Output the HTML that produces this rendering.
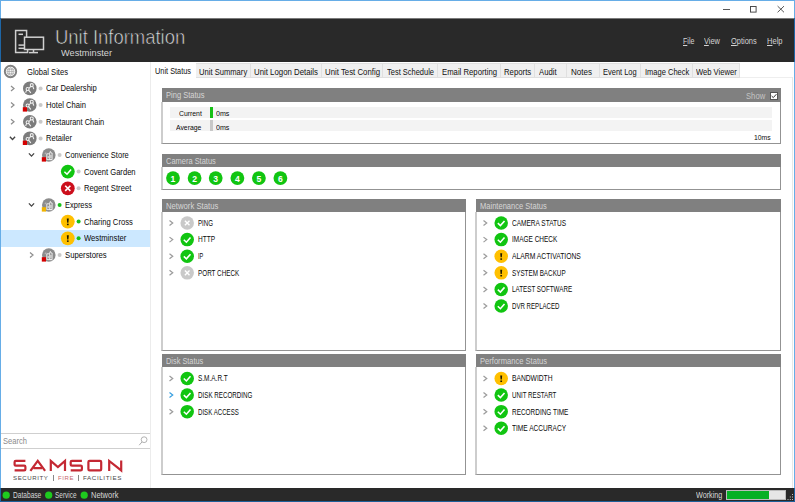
<!DOCTYPE html>
<html><head><meta charset="utf-8"><style>
html,body{margin:0;padding:0;}
body{width:795px;height:502px;position:relative;overflow:hidden;background:#fff;font-family:"Liberation Sans", sans-serif;}
</style></head><body>
<div style="position:absolute;left:0px;top:0px;width:795px;height:18px;background:#ffffff;"></div>
<div style="position:absolute;left:0px;top:18px;width:795px;height:44px;background:#292929;"></div>
<div style="position:absolute;left:0px;top:18px;width:795px;height:1px;background:#7a7a7a;"></div>
<div style="position:absolute;left:0px;top:488px;width:795px;height:14px;background:#292929;"></div>
<div style="position:absolute;left:150px;top:62px;width:1px;height:426px;background:#ececec;"></div>
<div style="position:absolute;left:0px;top:0px;width:795px;height:1px;background:#66ade7;"></div>
<div style="position:absolute;left:0px;top:0px;width:1px;height:18px;background:#66ade7;"></div>
<div style="position:absolute;left:0px;top:18px;width:1px;height:44px;background:#1e66a6;"></div>
<div style="position:absolute;left:0px;top:62px;width:1px;height:426px;background:#66ade7;"></div>
<div style="position:absolute;left:0px;top:488px;width:1px;height:14px;background:#1e66a6;"></div>
<div style="position:absolute;left:794px;top:0px;width:1px;height:18px;background:#66ade7;"></div>
<div style="position:absolute;left:794px;top:18px;width:1px;height:44px;background:#1e66a6;"></div>
<div style="position:absolute;left:794px;top:62px;width:1px;height:426px;background:#66ade7;"></div>
<div style="position:absolute;left:794px;top:488px;width:1px;height:14px;background:#1e66a6;"></div>
<div style="position:absolute;left:0px;top:501px;width:795px;height:1px;background:#1e5f98;"></div>
<svg style="position:absolute;left:0;top:0" width="795" height="20"><line x1="723" y1="9.5" x2="730" y2="9.5" stroke="#444" stroke-width="0.9"/><rect x="750.5" y="6.5" width="5.6" height="5.6" fill="none" stroke="#444" stroke-width="0.95"/><line x1="777.6" y1="6.1" x2="784" y2="12.3" stroke="#444" stroke-width="0.9"/><line x1="784" y1="6.1" x2="777.6" y2="12.3" stroke="#444" stroke-width="0.9"/></svg>
<svg style="position:absolute;left:0;top:0" width="60" height="62"><g fill="none" stroke="#d0d0d0" stroke-width="1.5"><path d="M26.6 37.2 V30.6 H15.6 V52.4 H27.6 V49.8"/><rect x="24.5" y="37.2" width="19" height="12.3"/><line x1="18.5" y1="34.3" x2="23" y2="34.3"/><line x1="18.5" y1="45.1" x2="24" y2="45.1"/><line x1="18.5" y1="48.3" x2="24" y2="48.3"/><line x1="33.5" y1="49.5" x2="33.5" y2="52.3"/><line x1="29" y1="52.6" x2="38" y2="52.6"/></g></svg>
<div style="position:absolute;left:151px;top:62px;width:45px;height:17px;background:#ffffff;"></div>
<div style="position:absolute;left:196px;top:63px;width:55px;height:15px;background:#f0f0f0;box-sizing:border-box;border:1px solid #e0e0e0;border-left:none;"></div>
<div style="position:absolute;left:251px;top:63px;width:71px;height:15px;background:#f0f0f0;box-sizing:border-box;border:1px solid #e0e0e0;border-left:none;"></div>
<div style="position:absolute;left:322px;top:63px;width:61px;height:15px;background:#f0f0f0;box-sizing:border-box;border:1px solid #e0e0e0;border-left:none;"></div>
<div style="position:absolute;left:383px;top:63px;width:55px;height:15px;background:#f0f0f0;box-sizing:border-box;border:1px solid #e0e0e0;border-left:none;"></div>
<div style="position:absolute;left:438px;top:63px;width:63px;height:15px;background:#f0f0f0;box-sizing:border-box;border:1px solid #e0e0e0;border-left:none;"></div>
<div style="position:absolute;left:501px;top:63px;width:34px;height:15px;background:#f0f0f0;box-sizing:border-box;border:1px solid #e0e0e0;border-left:none;"></div>
<div style="position:absolute;left:535px;top:63px;width:32px;height:15px;background:#f0f0f0;box-sizing:border-box;border:1px solid #e0e0e0;border-left:none;"></div>
<div style="position:absolute;left:567px;top:63px;width:33px;height:15px;background:#f0f0f0;box-sizing:border-box;border:1px solid #e0e0e0;border-left:none;"></div>
<div style="position:absolute;left:600px;top:63px;width:41px;height:15px;background:#f0f0f0;box-sizing:border-box;border:1px solid #e0e0e0;border-left:none;"></div>
<div style="position:absolute;left:641px;top:63px;width:52px;height:15px;background:#f0f0f0;box-sizing:border-box;border:1px solid #e0e0e0;border-left:none;"></div>
<div style="position:absolute;left:693px;top:63px;width:47px;height:15px;background:#f0f0f0;box-sizing:border-box;border:1px solid #e0e0e0;border-left:none;"></div>
<div style="position:absolute;left:740px;top:77px;width:53px;height:1px;background:#eeeeee;"></div>
<div style="position:absolute;left:792px;top:77px;width:1px;height:411px;background:#e8e8e8;"></div>
<div style="position:absolute;left:1px;top:230px;width:149px;height:17px;background:#cce8ff;"></div>
<svg style="position:absolute;left:0;top:0" width="151" height="270"><circle cx="10.5" cy="71.5" r="5.7" fill="none" stroke="#808080" stroke-width="1.9"/><g fill="none" stroke="#999" stroke-width="0.6"><circle cx="10.5" cy="71.5" r="3.6"/><ellipse cx="10.5" cy="71.5" rx="1.5" ry="3.6"/><line x1="7" y1="71.5" x2="14" y2="71.5"/><line x1="7.5" y1="69.7" x2="13.5" y2="69.7"/><line x1="7.5" y1="73.3" x2="13.5" y2="73.3"/></g><path d="M11.0 85.9 L14.0 88.4 L11.0 90.9" fill="none" stroke="#8e8e8e" stroke-width="1.25"/><circle cx="29.8" cy="88.4" r="6.8" fill="#7c7c7c"/><g fill="none" stroke="#f2f2f2" stroke-width="1.05" stroke-linecap="round"><circle cx="31.75" cy="85.10000000000001" r="1.5"/><path d="M30.7 86.4 L29.5 87.9 M32.8 86.4 L33.7 88.7"/><circle cx="27.6" cy="88.9" r="1.5"/><path d="M26.6 90.10000000000001 L25.8 92.30000000000001 M28.6 90.10000000000001 L30.6 92.60000000000001"/></g><circle cx="40.6" cy="88.4" r="2" fill="#c8c8c8"/><path d="M11.0 102.5 L14.0 105.0 L11.0 107.5" fill="none" stroke="#8e8e8e" stroke-width="1.25"/><circle cx="29.8" cy="105.0" r="6.8" fill="#7c7c7c"/><g fill="none" stroke="#f2f2f2" stroke-width="1.05" stroke-linecap="round"><circle cx="31.75" cy="101.7" r="1.5"/><path d="M30.7 103.0 L29.5 104.5 M32.8 103.0 L33.7 105.3"/><circle cx="27.6" cy="105.5" r="1.5"/><path d="M26.6 106.7 L25.8 108.9 M28.6 106.7 L30.6 109.2"/></g><rect x="22.8" y="107.2" width="4.2" height="4.4" fill="#d40000"/><circle cx="40.6" cy="105.0" r="2" fill="#c8c8c8"/><path d="M11.0 119.2 L14.0 121.7 L11.0 124.2" fill="none" stroke="#8e8e8e" stroke-width="1.25"/><circle cx="29.8" cy="121.7" r="6.8" fill="#7c7c7c"/><g fill="none" stroke="#f2f2f2" stroke-width="1.05" stroke-linecap="round"><circle cx="31.75" cy="118.4" r="1.5"/><path d="M30.7 119.7 L29.5 121.2 M32.8 119.7 L33.7 122.0"/><circle cx="27.6" cy="122.2" r="1.5"/><path d="M26.6 123.4 L25.8 125.60000000000001 M28.6 123.4 L30.6 125.9"/></g><circle cx="40.6" cy="121.7" r="2" fill="#c8c8c8"/><path d="M9.9 136.8 L12.5 139.5 L15.1 136.8" fill="none" stroke="#454545" stroke-width="1.35"/><circle cx="29.8" cy="138.4" r="6.8" fill="#7c7c7c"/><g fill="none" stroke="#f2f2f2" stroke-width="1.05" stroke-linecap="round"><circle cx="31.75" cy="135.1" r="1.5"/><path d="M30.7 136.4 L29.5 137.9 M32.8 136.4 L33.7 138.70000000000002"/><circle cx="27.6" cy="138.9" r="1.5"/><path d="M26.6 140.1 L25.8 142.3 M28.6 140.1 L30.6 142.6"/></g><rect x="22.8" y="140.6" width="4.2" height="4.4" fill="#d40000"/><circle cx="40.6" cy="138.4" r="2" fill="#c8c8c8"/><path d="M28.9 153.4 L31.5 156.1 L34.1 153.4" fill="none" stroke="#454545" stroke-width="1.35"/><circle cx="48.8" cy="155.0" r="6.8" fill="#8c8c8c"/><g fill="none" stroke="#f0f0f0" stroke-width="0.9"><path d="M46.8 159.6 V153.8 H49.4 M49.699999999999996 159.6 V153.0 L50.4 151.4 L51.099999999999994 153.0 H52.099999999999994 V159.6 Z"/><path d="M46.8 159.6 H52.099999999999994"/><line x1="48.199999999999996" y1="156.0" x2="48.199999999999996" y2="158.2"/><line x1="50.9" y1="155.0" x2="50.9" y2="158.2"/><path d="M44.599999999999994 153.7 H45.8 V152.4" stroke-width="0.7" stroke="#c8c8c8"/></g><rect x="41.8" y="157.2" width="4.2" height="4.4" fill="#d40000"/><circle cx="59.599999999999994" cy="155.0" r="2" fill="#c8c8c8"/><circle cx="67.8" cy="171.6" r="6.9" fill="#11c511"/><path d="M64.39999999999999 171.7 L67.0 174.2 L71.1 169.5" fill="none" stroke="#fff" stroke-width="1.55"/><circle cx="78.6" cy="171.6" r="2" fill="#c8c8c8"/><circle cx="67.8" cy="188.3" r="6.9" fill="#cc0f1c"/><path d="M65.2 185.70000000000002 L70.39999999999999 190.9 M70.39999999999999 185.70000000000002 L65.2 190.9" fill="none" stroke="#fff" stroke-width="1.6"/><circle cx="78.6" cy="188.3" r="2" fill="#c8c8c8"/><path d="M28.9 203.4 L31.5 206.1 L34.1 203.4" fill="none" stroke="#454545" stroke-width="1.35"/><circle cx="48.8" cy="205.0" r="6.8" fill="#8c8c8c"/><g fill="none" stroke="#f0f0f0" stroke-width="0.9"><path d="M46.8 209.6 V203.8 H49.4 M49.699999999999996 209.6 V203.0 L50.4 201.4 L51.099999999999994 203.0 H52.099999999999994 V209.6 Z"/><path d="M46.8 209.6 H52.099999999999994"/><line x1="48.199999999999996" y1="206.0" x2="48.199999999999996" y2="208.2"/><line x1="50.9" y1="205.0" x2="50.9" y2="208.2"/><path d="M44.599999999999994 203.7 H45.8 V202.4" stroke-width="0.7" stroke="#c8c8c8"/></g><rect x="41.8" y="207.2" width="4.2" height="4.4" fill="#f0b400"/><circle cx="59.599999999999994" cy="205.0" r="2" fill="#18c018"/><circle cx="67.8" cy="221.6" r="6.9" fill="#ffc000"/><path d="M66.8 218.6 H68.8 L68.39999999999999 222.7 H67.2 Z" fill="#1e1800"/><rect x="66.95" y="223.7" width="1.7" height="1.5" fill="#1e1800"/><circle cx="78.6" cy="221.6" r="2" fill="#18c018"/><circle cx="67.8" cy="238.3" r="6.9" fill="#ffc000"/><path d="M66.8 235.3 H68.8 L68.39999999999999 239.4 H67.2 Z" fill="#1e1800"/><rect x="66.95" y="240.4" width="1.7" height="1.5" fill="#1e1800"/><circle cx="78.6" cy="238.3" r="2" fill="#18c018"/><path d="M30.0 252.5 L33.0 255.0 L30.0 257.5" fill="none" stroke="#8e8e8e" stroke-width="1.25"/><circle cx="48.8" cy="255.0" r="6.8" fill="#8c8c8c"/><g fill="none" stroke="#f0f0f0" stroke-width="0.9"><path d="M46.8 259.6 V253.8 H49.4 M49.699999999999996 259.6 V253.0 L50.4 251.4 L51.099999999999994 253.0 H52.099999999999994 V259.6 Z"/><path d="M46.8 259.6 H52.099999999999994"/><line x1="48.199999999999996" y1="256.0" x2="48.199999999999996" y2="258.2"/><line x1="50.9" y1="255.0" x2="50.9" y2="258.2"/><path d="M44.599999999999994 253.7 H45.8 V252.4" stroke-width="0.7" stroke="#c8c8c8"/></g><rect x="41.8" y="257.2" width="4.2" height="4.4" fill="#d40000"/><circle cx="59.599999999999994" cy="255.0" r="2" fill="#c8c8c8"/></svg>
<div style="position:absolute;left:1px;top:433px;width:149px;height:1px;background:#cfcfcf;"></div>
<div style="position:absolute;left:1px;top:448px;width:149px;height:1px;background:#cfcfcf;"></div>
<svg style="position:absolute;left:136px;top:434px" width="14" height="14"><circle cx="8.1" cy="5.7" r="2.9" fill="none" stroke="#a4a4a4" stroke-width="0.85"/><line x1="6.0" y1="7.9" x2="3.2" y2="11.2" stroke="#a4a4a4" stroke-width="0.9"/></svg>
<svg style="position:absolute;left:0;top:0" width="150" height="488"><g fill="none" stroke="#c42833" stroke-width="2.2" stroke-linejoin="miter"><path d="M25.4 460.9 H15.799999999999999 Q14.6 460.9 14.6 462.09999999999997 V464.75 Q14.6 465.65 15.799999999999999 465.65 H24.2 Q25.4 465.65 25.4 466.84999999999997 V469.2 Q25.4 470.4 24.2 470.4 H14.6"/><path d="M30.4 470.9 L37.75 460.9 L45.1 470.9 M33.5 468.09999999999997 H42"/><path d="M50.8 470.9 V460.9 L57.9 467.15 L65 460.9 V470.9"/><path d="M81.9 460.9 H71.9 Q70.7 460.9 70.7 462.09999999999997 V464.75 Q70.7 465.65 71.9 465.65 H80.7 Q81.9 465.65 81.9 466.84999999999997 V469.2 Q81.9 470.4 80.7 470.4 H70.7"/><path d="M89.60000000000001 460.9 H100.0 Q101.2 460.9 101.2 462.09999999999997 V469.2 Q101.2 470.4 100.0 470.4 H89.60000000000001 Q88.4 470.4 88.4 469.2 V462.09999999999997 Q88.4 460.9 89.60000000000001 460.9 Z"/><path d="M109.2 470.9 V460.9 L121.2 470.4 V460.4"/></g></svg>
<div style="position:absolute;left:53px;top:474.5px;width:0.8px;height:6px;background:#888;"></div>
<div style="position:absolute;left:78.2px;top:474.5px;width:0.8px;height:6px;background:#888;"></div>
<svg style="position:absolute;left:0;top:486px" width="795" height="16"><circle cx="6.2" cy="9.2" r="3.6" fill="#1ecb1e"/><circle cx="48.7" cy="9.2" r="3.6" fill="#1ecb1e"/><circle cx="84.2" cy="9.2" r="3.6" fill="#1ecb1e"/></svg>
<div style="position:absolute;left:725.5px;top:490px;width:60px;height:9.5px;background:#e6e6e6;box-sizing:border-box;border:1px solid #bcbcbc;"></div>
<div style="position:absolute;left:726.5px;top:491px;width:42.5px;height:7.5px;background:#06b025;"></div>
<svg style="position:absolute;left:785px;top:490px" width="10" height="12"><g fill="#c4c4c4"><rect x="7" y="4" width="1" height="1"/><rect x="7" y="6.5" width="1" height="1"/><rect x="4.8" y="6.5" width="1" height="1"/><rect x="7" y="9" width="1" height="1"/><rect x="4.8" y="9" width="1" height="1"/><rect x="2.5" y="9" width="1" height="1"/></g></svg>
<div style="position:absolute;left:162px;top:88px;width:619px;height:14px;background:#808080;"></div>
<div style="position:absolute;left:161px;top:102px;width:620px;height:42px;background:#ffffff;box-sizing:border-box;border-left:2px solid #cdcdcd;border-right:1px solid #939393;border-bottom:1px solid #939393;"></div>
<div style="position:absolute;left:770px;top:92px;width:8px;height:8px;background:#ffffff;box-sizing:border-box;border:1px solid #555;"></div>
<svg style="position:absolute;left:770px;top:92px" width="8" height="8"><path d="M1.6 4 L3.3 5.6 L6.4 2.2" fill="none" stroke="#333" stroke-width="1"/></svg>
<div style="position:absolute;left:170px;top:107px;width:602px;height:11px;background:#f3f3f3;"></div>
<div style="position:absolute;left:170px;top:120px;width:602px;height:11px;background:#f3f3f3;"></div>
<div style="position:absolute;left:210px;top:107px;width:3px;height:11px;background:#16c016;"></div>
<div style="position:absolute;left:210px;top:120px;width:3px;height:11px;background:#c8c8c8;"></div>
<div style="position:absolute;left:162px;top:154px;width:619px;height:13px;background:#808080;"></div>
<div style="position:absolute;left:161px;top:167px;width:620px;height:23px;background:#ffffff;box-sizing:border-box;border-left:2px solid #cdcdcd;border-right:1px solid #939393;border-bottom:1px solid #939393;"></div>
<svg style="position:absolute;left:0;top:0" width="795" height="200"><circle cx="173" cy="178.1" r="6.9" fill="#11c511"/><circle cx="194.6" cy="178.1" r="6.9" fill="#11c511"/><circle cx="215.7" cy="178.1" r="6.9" fill="#11c511"/><circle cx="237.4" cy="178.1" r="6.9" fill="#11c511"/><circle cx="258.9" cy="178.1" r="6.9" fill="#11c511"/><circle cx="280.4" cy="178.1" r="6.9" fill="#11c511"/></svg>
<div style="position:absolute;left:162px;top:199px;width:304px;height:13px;background:#808080;"></div>
<div style="position:absolute;left:161px;top:212px;width:305px;height:139px;background:#ffffff;box-sizing:border-box;border-left:2px solid #cdcdcd;border-right:1px solid #939393;border-bottom:1px solid #939393;"></div>
<div style="position:absolute;left:476px;top:199px;width:305px;height:13px;background:#808080;"></div>
<div style="position:absolute;left:475px;top:212px;width:306px;height:139px;background:#ffffff;box-sizing:border-box;border-left:2px solid #cdcdcd;border-right:1px solid #939393;border-bottom:1px solid #939393;"></div>
<div style="position:absolute;left:162px;top:354px;width:304px;height:13px;background:#808080;"></div>
<div style="position:absolute;left:161px;top:367px;width:305px;height:108px;background:#ffffff;box-sizing:border-box;border-left:2px solid #cdcdcd;border-right:1px solid #939393;border-bottom:1px solid #939393;"></div>
<div style="position:absolute;left:476px;top:354px;width:305px;height:13px;background:#808080;"></div>
<div style="position:absolute;left:475px;top:367px;width:306px;height:108px;background:#ffffff;box-sizing:border-box;border-left:2px solid #cdcdcd;border-right:1px solid #939393;border-bottom:1px solid #939393;"></div>
<svg style="position:absolute;left:0;top:0" width="795" height="488"><path d="M169.5 220.5 L172.7 223.0 L169.5 225.5" fill="none" stroke="#9c9c9c" stroke-width="1.25"/><circle cx="187.2" cy="223.0" r="6.75" fill="#c9c9c9"/><path d="M184.89999999999998 220.7 L189.5 225.3 M189.5 220.7 L184.89999999999998 225.3" fill="none" stroke="#fff" stroke-width="1.4"/><path d="M169.5 237.12 L172.7 239.62 L169.5 242.12" fill="none" stroke="#9c9c9c" stroke-width="1.25"/><circle cx="187.2" cy="239.62" r="6.75" fill="#11c511"/><path d="M183.79999999999998 239.72 L186.39999999999998 242.22 L190.5 237.52" fill="none" stroke="#fff" stroke-width="1.55"/><path d="M169.5 253.74 L172.7 256.24 L169.5 258.74" fill="none" stroke="#9c9c9c" stroke-width="1.25"/><circle cx="187.2" cy="256.24" r="6.75" fill="#11c511"/><path d="M183.79999999999998 256.34000000000003 L186.39999999999998 258.84000000000003 L190.5 254.14000000000001" fill="none" stroke="#fff" stroke-width="1.55"/><path d="M169.5 270.36 L172.7 272.86 L169.5 275.36" fill="none" stroke="#9c9c9c" stroke-width="1.25"/><circle cx="187.2" cy="272.86" r="6.75" fill="#c9c9c9"/><path d="M184.89999999999998 270.56 L189.5 275.16 M189.5 270.56 L184.89999999999998 275.16" fill="none" stroke="#fff" stroke-width="1.4"/><path d="M483.5 220.5 L486.7 223.0 L483.5 225.5" fill="none" stroke="#9c9c9c" stroke-width="1.25"/><circle cx="501.2" cy="223.0" r="6.75" fill="#11c511"/><path d="M497.8 223.1 L500.4 225.6 L504.5 220.9" fill="none" stroke="#fff" stroke-width="1.55"/><path d="M483.5 237.12 L486.7 239.62 L483.5 242.12" fill="none" stroke="#9c9c9c" stroke-width="1.25"/><circle cx="501.2" cy="239.62" r="6.75" fill="#11c511"/><path d="M497.8 239.72 L500.4 242.22 L504.5 237.52" fill="none" stroke="#fff" stroke-width="1.55"/><path d="M483.5 253.74 L486.7 256.24 L483.5 258.74" fill="none" stroke="#9c9c9c" stroke-width="1.25"/><circle cx="501.2" cy="256.24" r="6.75" fill="#ffc000"/><path d="M500.2 253.24 H502.2 L501.8 257.34000000000003 H500.59999999999997 Z" fill="#1e1800"/><rect x="500.34999999999997" y="258.34000000000003" width="1.7" height="1.5" fill="#1e1800"/><path d="M483.5 270.36 L486.7 272.86 L483.5 275.36" fill="none" stroke="#9c9c9c" stroke-width="1.25"/><circle cx="501.2" cy="272.86" r="6.75" fill="#ffc000"/><path d="M500.2 269.86 H502.2 L501.8 273.96000000000004 H500.59999999999997 Z" fill="#1e1800"/><rect x="500.34999999999997" y="274.96000000000004" width="1.7" height="1.5" fill="#1e1800"/><path d="M483.5 286.98 L486.7 289.48 L483.5 291.98" fill="none" stroke="#9c9c9c" stroke-width="1.25"/><circle cx="501.2" cy="289.48" r="6.75" fill="#11c511"/><path d="M497.8 289.58000000000004 L500.4 292.08000000000004 L504.5 287.38" fill="none" stroke="#fff" stroke-width="1.55"/><path d="M483.5 303.6 L486.7 306.1 L483.5 308.6" fill="none" stroke="#9c9c9c" stroke-width="1.25"/><circle cx="501.2" cy="306.1" r="6.75" fill="#11c511"/><path d="M497.8 306.20000000000005 L500.4 308.70000000000005 L504.5 304.0" fill="none" stroke="#fff" stroke-width="1.55"/><path d="M169.5 375.9 L172.7 378.4 L169.5 380.9" fill="none" stroke="#9c9c9c" stroke-width="1.25"/><circle cx="187.2" cy="378.4" r="6.75" fill="#11c511"/><path d="M183.79999999999998 378.5 L186.39999999999998 381.0 L190.5 376.29999999999995" fill="none" stroke="#fff" stroke-width="1.55"/><path d="M169.5 392.52 L172.7 395.02 L169.5 397.52" fill="none" stroke="#3aa0e0" stroke-width="1.25"/><circle cx="187.2" cy="395.02" r="6.75" fill="#11c511"/><path d="M183.79999999999998 395.12 L186.39999999999998 397.62 L190.5 392.91999999999996" fill="none" stroke="#fff" stroke-width="1.55"/><path d="M169.5 409.14 L172.7 411.64 L169.5 414.14" fill="none" stroke="#9c9c9c" stroke-width="1.25"/><circle cx="187.2" cy="411.64" r="6.75" fill="#11c511"/><path d="M183.79999999999998 411.74 L186.39999999999998 414.24 L190.5 409.53999999999996" fill="none" stroke="#fff" stroke-width="1.55"/><path d="M483.5 375.9 L486.7 378.4 L483.5 380.9" fill="none" stroke="#9c9c9c" stroke-width="1.25"/><circle cx="501.2" cy="378.4" r="6.75" fill="#ffc000"/><path d="M500.2 375.4 H502.2 L501.8 379.5 H500.59999999999997 Z" fill="#1e1800"/><rect x="500.34999999999997" y="380.5" width="1.7" height="1.5" fill="#1e1800"/><path d="M483.5 392.52 L486.7 395.02 L483.5 397.52" fill="none" stroke="#9c9c9c" stroke-width="1.25"/><circle cx="501.2" cy="395.02" r="6.75" fill="#11c511"/><path d="M497.8 395.12 L500.4 397.62 L504.5 392.91999999999996" fill="none" stroke="#fff" stroke-width="1.55"/><path d="M483.5 409.14 L486.7 411.64 L483.5 414.14" fill="none" stroke="#9c9c9c" stroke-width="1.25"/><circle cx="501.2" cy="411.64" r="6.75" fill="#11c511"/><path d="M497.8 411.74 L500.4 414.24 L504.5 409.53999999999996" fill="none" stroke="#fff" stroke-width="1.55"/><path d="M483.5 425.76 L486.7 428.26 L483.5 430.76" fill="none" stroke="#9c9c9c" stroke-width="1.25"/><circle cx="501.2" cy="428.26" r="6.75" fill="#11c511"/><path d="M497.8 428.36 L500.4 430.86 L504.5 426.15999999999997" fill="none" stroke="#fff" stroke-width="1.55"/></svg>
<div style="position:absolute;left:55.0px;top:27.94px;font-size:19.8px;line-height:1;font-weight:normal;color:#e2e2e2;white-space:nowrap;transform:scaleX(0.9324);transform-origin:0 0;-webkit-text-stroke:0.65px #2b2b2b;">Unit Information</div>
<div style="position:absolute;left:61.4px;top:49.28px;font-size:9px;line-height:1;font-weight:normal;color:#d4d4d4;white-space:nowrap;transform:scaleX(1.0232);transform-origin:0 0;">Westminster</div>
<div style="position:absolute;left:682.5px;top:37.48px;font-size:9px;line-height:1;font-weight:normal;color:#d4d4d4;white-space:nowrap;transform:scaleX(0.7854);transform-origin:0 0;"><u>F</u>ile</div>
<div style="position:absolute;left:704.4px;top:37.48px;font-size:9px;line-height:1;font-weight:normal;color:#d4d4d4;white-space:nowrap;transform:scaleX(0.8213);transform-origin:0 0;"><u>V</u>iew</div>
<div style="position:absolute;left:730.8px;top:37.48px;font-size:9px;line-height:1;font-weight:normal;color:#d4d4d4;white-space:nowrap;transform:scaleX(0.8278);transform-origin:0 0;"><u>O</u>ptions</div>
<div style="position:absolute;left:767px;top:37.48px;font-size:9px;line-height:1;font-weight:normal;color:#d4d4d4;white-space:nowrap;transform:scaleX(0.8371);transform-origin:0 0;"><u>H</u>elp</div>
<div style="position:absolute;left:155px;top:67.56px;font-size:8.2px;line-height:1;font-weight:normal;color:#101010;white-space:nowrap;transform:scaleX(0.8989);transform-origin:0 0;">Unit Status</div>
<div style="position:absolute;left:198.8px;top:68.76px;font-size:8.2px;line-height:1;font-weight:normal;color:#101010;white-space:nowrap;transform:scaleX(0.9292);transform-origin:0 0;">Unit Summary</div>
<div style="position:absolute;left:254px;top:68.76px;font-size:8.2px;line-height:1;font-weight:normal;color:#101010;white-space:nowrap;transform:scaleX(0.9566);transform-origin:0 0;">Unit Logon Details</div>
<div style="position:absolute;left:325px;top:68.76px;font-size:8.2px;line-height:1;font-weight:normal;color:#101010;white-space:nowrap;transform:scaleX(0.9539);transform-origin:0 0;">Unit Test Config</div>
<div style="position:absolute;left:387px;top:68.76px;font-size:8.2px;line-height:1;font-weight:normal;color:#101010;white-space:nowrap;transform:scaleX(0.9137);transform-origin:0 0;">Test Schedule</div>
<div style="position:absolute;left:441.8px;top:68.76px;font-size:8.2px;line-height:1;font-weight:normal;color:#101010;white-space:nowrap;transform:scaleX(0.9442);transform-origin:0 0;">Email Reporting</div>
<div style="position:absolute;left:504.4px;top:68.76px;font-size:8.2px;line-height:1;font-weight:normal;color:#101010;white-space:nowrap;transform:scaleX(0.9487);transform-origin:0 0;">Reports</div>
<div style="position:absolute;left:539px;top:68.76px;font-size:8.2px;line-height:1;font-weight:normal;color:#101010;white-space:nowrap;transform:scaleX(0.9426);transform-origin:0 0;">Audit</div>
<div style="position:absolute;left:571px;top:68.76px;font-size:8.2px;line-height:1;font-weight:normal;color:#101010;white-space:nowrap;transform:scaleX(0.9817);transform-origin:0 0;">Notes</div>
<div style="position:absolute;left:603.3px;top:68.76px;font-size:8.2px;line-height:1;font-weight:normal;color:#101010;white-space:nowrap;transform:scaleX(0.9139);transform-origin:0 0;">Event Log</div>
<div style="position:absolute;left:644.5px;top:68.76px;font-size:8.2px;line-height:1;font-weight:normal;color:#101010;white-space:nowrap;transform:scaleX(0.9181);transform-origin:0 0;">Image Check</div>
<div style="position:absolute;left:696.3px;top:68.76px;font-size:8.2px;line-height:1;font-weight:normal;color:#101010;white-space:nowrap;transform:scaleX(0.9283);transform-origin:0 0;">Web Viewer</div>
<div style="position:absolute;left:27px;top:68.76px;font-size:8.2px;line-height:1;font-weight:normal;color:#0a0a0a;white-space:nowrap;transform:scaleX(0.9285);transform-origin:0 0;">Global Sites</div>
<div style="position:absolute;left:46px;top:85.36px;font-size:8.2px;line-height:1;font-weight:normal;color:#0a0a0a;white-space:nowrap;transform:scaleX(0.9302);transform-origin:0 0;">Car Dealership</div>
<div style="position:absolute;left:46px;top:101.96px;font-size:8.2px;line-height:1;font-weight:normal;color:#0a0a0a;white-space:nowrap;transform:scaleX(0.9327);transform-origin:0 0;">Hotel Chain</div>
<div style="position:absolute;left:46px;top:118.66px;font-size:8.2px;line-height:1;font-weight:normal;color:#0a0a0a;white-space:nowrap;transform:scaleX(0.9134);transform-origin:0 0;">Restaurant Chain</div>
<div style="position:absolute;left:46px;top:135.36px;font-size:8.2px;line-height:1;font-weight:normal;color:#0a0a0a;white-space:nowrap;transform:scaleX(0.9214);transform-origin:0 0;">Retailer</div>
<div style="position:absolute;left:65px;top:151.96px;font-size:8.2px;line-height:1;font-weight:normal;color:#0a0a0a;white-space:nowrap;transform:scaleX(0.9161);transform-origin:0 0;">Convenience Store</div>
<div style="position:absolute;left:84px;top:168.56px;font-size:8.2px;line-height:1;font-weight:normal;color:#0a0a0a;white-space:nowrap;transform:scaleX(0.9292);transform-origin:0 0;">Covent Garden</div>
<div style="position:absolute;left:84px;top:185.26px;font-size:8.2px;line-height:1;font-weight:normal;color:#0a0a0a;white-space:nowrap;transform:scaleX(0.9361);transform-origin:0 0;">Regent Street</div>
<div style="position:absolute;left:65px;top:201.96px;font-size:8.2px;line-height:1;font-weight:normal;color:#0a0a0a;white-space:nowrap;transform:scaleX(0.9128);transform-origin:0 0;">Express</div>
<div style="position:absolute;left:84px;top:218.56px;font-size:8.2px;line-height:1;font-weight:normal;color:#0a0a0a;white-space:nowrap;transform:scaleX(0.9326);transform-origin:0 0;">Charing Cross</div>
<div style="position:absolute;left:84px;top:235.26px;font-size:8.2px;line-height:1;font-weight:normal;color:#0a0a0a;white-space:nowrap;transform:scaleX(0.9329);transform-origin:0 0;">Westminster</div>
<div style="position:absolute;left:65px;top:251.96px;font-size:8.2px;line-height:1;font-weight:normal;color:#0a0a0a;white-space:nowrap;transform:scaleX(0.9444);transform-origin:0 0;">Superstores</div>
<div style="position:absolute;left:2.9px;top:437.96px;font-size:8.2px;line-height:1;font-weight:normal;color:#8a8a8a;white-space:nowrap;transform:scaleX(0.9247);transform-origin:0 0;">Search</div>
<div style="position:absolute;left:13.4px;top:475.45px;font-size:6.2px;line-height:1;font-weight:normal;color:#4a4a4a;white-space:nowrap;transform:scaleX(0.9835);transform-origin:0 0;letter-spacing:0.6px;">SECURITY</div>
<div style="position:absolute;left:58.3px;top:475.45px;font-size:6.2px;line-height:1;font-weight:normal;color:#c86870;white-space:nowrap;transform:scaleX(0.9697);transform-origin:0 0;letter-spacing:0.6px;">FIRE</div>
<div style="position:absolute;left:83.1px;top:475.45px;font-size:6.2px;line-height:1;font-weight:normal;color:#4a4a4a;white-space:nowrap;transform:scaleX(1.0085);transform-origin:0 0;letter-spacing:0.6px;">FACILITIES</div>
<div style="position:absolute;left:12.8px;top:491.96px;font-size:8.2px;line-height:1;font-weight:normal;color:#d8d8d8;white-space:nowrap;transform:scaleX(0.8071);transform-origin:0 0;">Database</div>
<div style="position:absolute;left:55px;top:491.96px;font-size:8.2px;line-height:1;font-weight:normal;color:#d8d8d8;white-space:nowrap;transform:scaleX(0.7908);transform-origin:0 0;">Service</div>
<div style="position:absolute;left:90.6px;top:491.96px;font-size:8.2px;line-height:1;font-weight:normal;color:#d8d8d8;white-space:nowrap;transform:scaleX(0.9124);transform-origin:0 0;">Network</div>
<div style="position:absolute;left:696px;top:491.96px;font-size:8.2px;line-height:1;font-weight:normal;color:#d8d8d8;white-space:nowrap;transform:scaleX(0.8832);transform-origin:0 0;">Working</div>
<div style="position:absolute;left:165.8px;top:92.36px;font-size:8.2px;line-height:1;font-weight:normal;color:#d6d6d6;white-space:nowrap;transform:scaleX(0.9194);transform-origin:0 0;">Ping Status</div>
<div style="position:absolute;left:745.8px;top:93.16px;font-size:8.2px;line-height:1;font-weight:normal;color:#c4c4c4;white-space:nowrap;transform:scaleX(0.9373);transform-origin:0 0;">Show</div>
<div style="position:absolute;left:178.6px;top:110.27px;font-size:7.6px;line-height:1;font-weight:normal;color:#0a0a0a;white-space:nowrap;transform:scaleX(0.9002);transform-origin:0 0;">Current</div>
<div style="position:absolute;left:175.9px;top:123.87px;font-size:7.6px;line-height:1;font-weight:normal;color:#0a0a0a;white-space:nowrap;transform:scaleX(0.8986);transform-origin:0 0;">Average</div>
<div style="position:absolute;left:215.8px;top:110.27px;font-size:7.6px;line-height:1;font-weight:normal;color:#0a0a0a;white-space:nowrap;transform:scaleX(0.9332);transform-origin:0 0;">0ms</div>
<div style="position:absolute;left:215.8px;top:123.87px;font-size:7.6px;line-height:1;font-weight:normal;color:#0a0a0a;white-space:nowrap;transform:scaleX(0.9332);transform-origin:0 0;">0ms</div>
<div style="position:absolute;left:753.5px;top:134.37px;font-size:7.6px;line-height:1;font-weight:normal;color:#0a0a0a;white-space:nowrap;transform:scaleX(0.8989);transform-origin:0 0;">10ms</div>
<div style="position:absolute;left:165.8px;top:158.36px;font-size:8.2px;line-height:1;font-weight:normal;color:#d6d6d6;white-space:nowrap;transform:scaleX(0.9119);transform-origin:0 0;">Camera Status</div>
<div style="position:absolute;left:170.6px;top:175.22px;font-size:8.6px;line-height:1;font-weight:bold;color:#ffffff;white-space:nowrap;">1</div>
<div style="position:absolute;left:192.2px;top:175.22px;font-size:8.6px;line-height:1;font-weight:bold;color:#ffffff;white-space:nowrap;">2</div>
<div style="position:absolute;left:213.29999999999998px;top:175.22px;font-size:8.6px;line-height:1;font-weight:bold;color:#ffffff;white-space:nowrap;">3</div>
<div style="position:absolute;left:235.0px;top:175.22px;font-size:8.6px;line-height:1;font-weight:bold;color:#ffffff;white-space:nowrap;">4</div>
<div style="position:absolute;left:256.5px;top:175.22px;font-size:8.6px;line-height:1;font-weight:bold;color:#ffffff;white-space:nowrap;">5</div>
<div style="position:absolute;left:278.0px;top:175.22px;font-size:8.6px;line-height:1;font-weight:bold;color:#ffffff;white-space:nowrap;">6</div>
<div style="position:absolute;left:165.8px;top:203.36px;font-size:8.2px;line-height:1;font-weight:normal;color:#d6d6d6;white-space:nowrap;transform:scaleX(0.9421);transform-origin:0 0;">Network Status</div>
<div style="position:absolute;left:479.8px;top:203.36px;font-size:8.2px;line-height:1;font-weight:normal;color:#d6d6d6;white-space:nowrap;transform:scaleX(0.9216);transform-origin:0 0;">Maintenance Status</div>
<div style="position:absolute;left:165.8px;top:358.36px;font-size:8.2px;line-height:1;font-weight:normal;color:#d6d6d6;white-space:nowrap;transform:scaleX(0.9008);transform-origin:0 0;">Disk Status</div>
<div style="position:absolute;left:479.8px;top:358.36px;font-size:8.2px;line-height:1;font-weight:normal;color:#d6d6d6;white-space:nowrap;transform:scaleX(0.9259);transform-origin:0 0;">Performance Status</div>
<div style="position:absolute;left:197.8px;top:219.86px;font-size:8.2px;line-height:1;font-weight:normal;color:#0a0a0a;white-space:nowrap;transform:scaleX(0.7538);transform-origin:0 0;">PING</div>
<div style="position:absolute;left:197.8px;top:236.48px;font-size:8.2px;line-height:1;font-weight:normal;color:#0a0a0a;white-space:nowrap;transform:scaleX(0.7994);transform-origin:0 0;">HTTP</div>
<div style="position:absolute;left:197.8px;top:253.10px;font-size:8.2px;line-height:1;font-weight:normal;color:#0a0a0a;white-space:nowrap;transform:scaleX(0.6839);transform-origin:0 0;">IP</div>
<div style="position:absolute;left:197.8px;top:269.72px;font-size:8.2px;line-height:1;font-weight:normal;color:#0a0a0a;white-space:nowrap;transform:scaleX(0.7717);transform-origin:0 0;">PORT CHECK</div>
<div style="position:absolute;left:511.8px;top:219.86px;font-size:8.2px;line-height:1;font-weight:normal;color:#0a0a0a;white-space:nowrap;transform:scaleX(0.7963);transform-origin:0 0;">CAMERA STATUS</div>
<div style="position:absolute;left:511.8px;top:236.48px;font-size:8.2px;line-height:1;font-weight:normal;color:#0a0a0a;white-space:nowrap;transform:scaleX(0.7902);transform-origin:0 0;">IMAGE CHECK</div>
<div style="position:absolute;left:511.8px;top:253.10px;font-size:8.2px;line-height:1;font-weight:normal;color:#0a0a0a;white-space:nowrap;transform:scaleX(0.8249);transform-origin:0 0;">ALARM ACTIVATIONS</div>
<div style="position:absolute;left:511.8px;top:269.72px;font-size:8.2px;line-height:1;font-weight:normal;color:#0a0a0a;white-space:nowrap;transform:scaleX(0.7698);transform-origin:0 0;">SYSTEM BACKUP</div>
<div style="position:absolute;left:511.8px;top:286.34px;font-size:8.2px;line-height:1;font-weight:normal;color:#0a0a0a;white-space:nowrap;transform:scaleX(0.7650);transform-origin:0 0;">LATEST SOFTWARE</div>
<div style="position:absolute;left:511.8px;top:302.96px;font-size:8.2px;line-height:1;font-weight:normal;color:#0a0a0a;white-space:nowrap;transform:scaleX(0.7456);transform-origin:0 0;">DVR REPLACED</div>
<div style="position:absolute;left:197.8px;top:375.26px;font-size:8.2px;line-height:1;font-weight:normal;color:#0a0a0a;white-space:nowrap;transform:scaleX(0.7891);transform-origin:0 0;">S.M.A.R.T</div>
<div style="position:absolute;left:197.8px;top:391.88px;font-size:8.2px;line-height:1;font-weight:normal;color:#0a0a0a;white-space:nowrap;transform:scaleX(0.7617);transform-origin:0 0;">DISK RECORDING</div>
<div style="position:absolute;left:197.8px;top:408.50px;font-size:8.2px;line-height:1;font-weight:normal;color:#0a0a0a;white-space:nowrap;transform:scaleX(0.7471);transform-origin:0 0;">DISK ACCESS</div>
<div style="position:absolute;left:511.8px;top:375.26px;font-size:8.2px;line-height:1;font-weight:normal;color:#0a0a0a;white-space:nowrap;transform:scaleX(0.8169);transform-origin:0 0;">BANDWIDTH</div>
<div style="position:absolute;left:511.8px;top:391.88px;font-size:8.2px;line-height:1;font-weight:normal;color:#0a0a0a;white-space:nowrap;transform:scaleX(0.7565);transform-origin:0 0;">UNIT RESTART</div>
<div style="position:absolute;left:511.8px;top:408.50px;font-size:8.2px;line-height:1;font-weight:normal;color:#0a0a0a;white-space:nowrap;transform:scaleX(0.7862);transform-origin:0 0;">RECORDING TIME</div>
<div style="position:absolute;left:511.8px;top:425.12px;font-size:8.2px;line-height:1;font-weight:normal;color:#0a0a0a;white-space:nowrap;transform:scaleX(0.8035);transform-origin:0 0;">TIME ACCURACY</div>
</body></html>
